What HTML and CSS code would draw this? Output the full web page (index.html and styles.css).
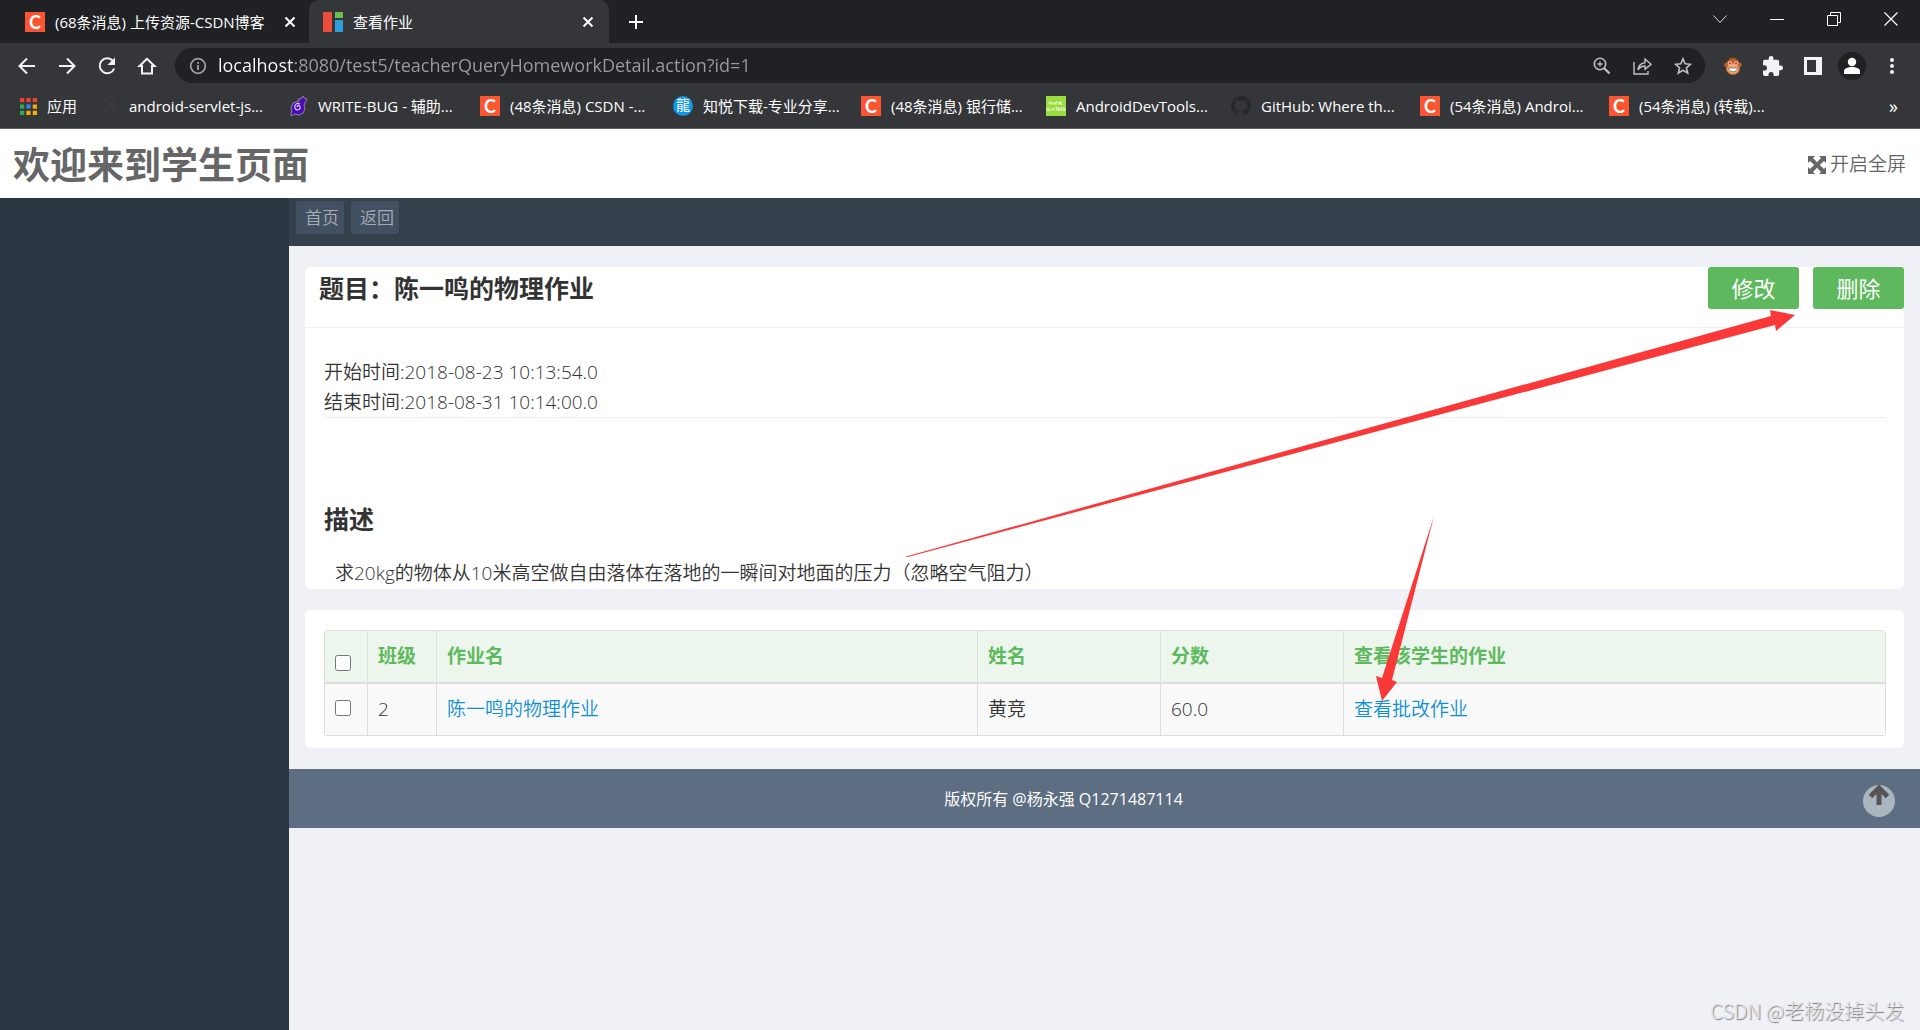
FILE: index.html
```html
<!DOCTYPE html>
<html lang="zh-CN">
<head>
<meta charset="utf-8">
<title>查看作业</title>
<link rel="stylesheet" href="styles.css">
</head>
<body>
<div class="window">
  <header class="browser">
    <div class="tabstrip">
      <div class="tab">
        <span class="fav fav-c">C</span>
        <span class="tab-title">(68条消息) 上传资源-CSDN博客</span>
        <button class="icon-btn close" aria-label="关闭标签页"><svg width="12" height="12" viewBox="0 0 12 12"><path d="M1.5 1.5l9 9M10.5 1.5l-9 9" stroke="#fff" stroke-width="2"/></svg></button>
      </div>
      <div class="tab tab-active">
        <svg class="fav" viewBox="0 0 20 20"><path fill="#eb4d3a" d="M0 0h9v20H0z"/><path fill="#6abf4b" d="M12 0h8v6h-8z"/><path fill="#2e9fdb" d="M12 8h8v12h-8z"/><path fill="#333" d="M9 0h1v20H9zM12 6h8v1h-8z"/></svg>
        <span class="tab-title">查看作业</span>
        <button class="icon-btn close" aria-label="关闭标签页"><svg width="12" height="12" viewBox="0 0 12 12"><path d="M1.5 1.5l9 9M10.5 1.5l-9 9" stroke="#fff" stroke-width="2"/></svg></button>
      </div>
      <button class="icon-btn newtab" aria-label="新标签页"><svg width="16" height="16" viewBox="0 0 16 16"><path d="M8 1v14M1 8h14" stroke="#fff" stroke-width="2"/></svg></button>
      <div class="win-controls">
        <button class="icon-btn" aria-label="搜索标签页"><svg width="14" height="14" viewBox="0 0 14 14"><path d="M.5 3.500l6.500 7 6.500-7" fill="none" stroke="#ddd"/></svg></button>
        <button class="icon-btn" aria-label="最小化"><svg width="14" height="14" viewBox="0 0 14 14"><path d="M0 7.500h14" stroke="#fff"/></svg></button>
        <button class="icon-btn" aria-label="还原"><svg width="14" height="14" viewBox="0 0 14 14"><path d="M.5 3.500h10v10H.5zM3.500 3V.5h10v10H11" fill="none" stroke="#fff"/></svg></button>
        <button class="icon-btn" aria-label="关闭"><svg width="14" height="14" viewBox="0 0 14 14"><path d="M.5.5l13 13M13.500.5l-13 13" stroke="#fff" stroke-width="1.200"/></svg></button>
      </div>
    </div>

    <div class="toolbar">
      <div class="nav-btns">
        <button class="icon-btn" aria-label="后退"><svg width="20" height="20" viewBox="0 0 20 20"><path d="M18 10H3M10 2.500L2.500 10l7.500 7.500" fill="none" stroke="#f1f3f4" stroke-width="2"/></svg></button>
        <button class="icon-btn" aria-label="前进"><svg width="20" height="20" viewBox="0 0 20 20"><path d="M2 10h15M10 2.500l7.500 7.500-7.500 7.500" fill="none" stroke="#f1f3f4" stroke-width="2"/></svg></button>
        <button class="icon-btn" aria-label="刷新"><svg width="20" height="20" viewBox="0 0 20 20"><path d="M16 5A7.500 7.500 0 1 0 17.200 12.500" fill="none" stroke="#f1f3f4" stroke-width="2"/><path d="M18 1.500V9h-7.500z" fill="#f1f3f4"/></svg></button>
        <button class="icon-btn" aria-label="主页"><svg width="20" height="20" viewBox="0 0 20 20"><path d="M10 2.800L2.500 10H5v7.500h10V10h2.500z" fill="none" stroke="#f1f3f4" stroke-width="2"/></svg></button>
      </div>
      <div class="omnibox">
        <svg width="18" height="18" viewBox="0 0 18 18"><circle cx="9" cy="9" r="7.300" fill="none" stroke="#9aa0a6" stroke-width="1.700"/><path d="M9 8v5M9 5v1.800" stroke="#9aa0a6" stroke-width="1.800"/></svg>
        <input class="url" type="text" aria-label="地址" value="localhost:8080/test5/teacherQueryHomeworkDetail.action?id=1">
        <button class="icon-btn" aria-label="缩放"><svg width="18" height="18" viewBox="0 0 18 18"><circle cx="7" cy="7" r="5.700" fill="none" stroke="#bdc1c6" stroke-width="1.600"/><path d="M11.200 11.200L16.500 16.500" stroke="#bdc1c6" stroke-width="2.200"/><path d="M7 4.500v5M4.500 7h5" stroke="#bdc1c6" stroke-width="1.300"/></svg></button>
        <button class="icon-btn" aria-label="分享"><svg width="19" height="18" viewBox="0 0 19 18"><path d="M1 5v12h14v-3M5 13C5.500 8.500 8 6 12 5.700V2l6 5.300-6 5V9C9 9 6.500 10.500 5 13z" fill="none" stroke="#bdc1c6" stroke-width="1.400"/></svg></button>
        <button class="icon-btn" aria-label="收藏"><svg width="18" height="18" viewBox="0 0 18 18"><path d="M9 1.800l2.100 5 5.400.5-4.100 3.500 1.300 5.300L9 13.300l-4.700 2.800 1.300-5.300L1.500 7.300l5.400-.5z" fill="none" stroke="#bdc1c6" stroke-width="1.600"/></svg></button>
      </div>
      <div class="extensions">
        <button class="icon-btn" aria-label="扩展"><svg width="18" height="20" viewBox="0 0 18 20"><path d="M5 3l1-2 2 1 1-2 1 2 2-1v2z" fill="#7b4226"/><circle cx="2.500" cy="9" r="2.300" fill="#b5662f"/><circle cx="15.500" cy="9" r="2.300" fill="#b5662f"/><rect x="2" y="2.500" width="14" height="16.500" rx="6.500" fill="#b5662f"/><ellipse cx="9" cy="13" rx="6" ry="5" fill="#e8a878"/><circle cx="6" cy="7.500" r="2.200" fill="#f3b890"/><circle cx="12" cy="7.500" r="2.200" fill="#f3b890"/><circle cx="6" cy="7.500" r="1" fill="#e11"/><circle cx="12" cy="7.500" r="1" fill="#e11"/><path d="M4.500 12h9c0 5-9 5-9 0z" fill="#fff" stroke="#6b3a20" stroke-width=".6"/></svg></button>
        <button class="icon-btn" aria-label="扩展程序"><svg width="20" height="20" viewBox="2 1 21 21"><path fill="#f1f3f4" d="M20.500 11H19V7a2 2 0 0 0-2-2h-4V3.500a2.500 2.500 0 0 0-5 0V5H4a2 2 0 0 0-2 2v3.800h1.500a2.700 2.700 0 0 1 0 5.400H2V20a2 2 0 0 0 2 2h3.800v-1.500a2.700 2.700 0 0 1 5.400 0V22H17a2 2 0 0 0 2-2v-4h1.500a2.500 2.500 0 0 0 0-5z"/></svg></button>
        <button class="icon-btn" aria-label="侧边栏"><svg width="18" height="18" viewBox="0 0 18 18"><path fill="#f1f3f4" fill-rule="evenodd" d="M0 0h18v18H0zM3 3v12h9V3z"/></svg></button>
        <button class="icon-btn avatar" aria-label="用户"><svg width="18" height="18" viewBox="0 0 18 18"><circle cx="9" cy="5" r="4.200" fill="#fff"/><path d="M1 17v-3c0-3 5-4 8-4s8 1 8 4v3z" fill="#fff"/></svg></button>
        <button class="icon-btn" aria-label="菜单"><svg width="20" height="18" viewBox="0 0 20 18"><g fill="#f1f3f4"><circle cx="10" cy="3" r="2"/><circle cx="10" cy="9" r="2"/><circle cx="10" cy="15" r="2"/></g></svg></button>
      </div>
    </div>

    <nav class="bookmarks" aria-label="书签">
      <a class="bm" href="#"><svg class="apps" viewBox="0 0 16 16"><path fill="#ea4335" d="M0 0h4v4H0zM6 0h4v4H6zM12 0h4v4h-4z"/><path fill="#34a853" d="M0 6h4v4H0zM0 12h4v4H0z"/><path fill="#2b88f0" d="M6 6h4v4H6z"/><path fill="#fbab05" d="M12 6h4v4h-4zM6 12h4v4H6zM12 12h4v4h-4z"/></svg>应用</a>
      <a class="bm" href="#"><svg class="fav" viewBox="0 0 20 20"><g fill="none" stroke="#463c3c"><circle cx="11" cy="4" r="3.500"/><path d="M2 8c-1 6 4 8 8 6l2-6c3 1 3 6 5 8"/></g></svg>android-servlet-js...</a>
      <a class="bm" href="#"><svg class="fav" viewBox="0 0 20 20"><path d="M11 5l-1-2 3 0 2-3 1 2 3 1-2 4-1 2 1 4-2 4-4 2-4-1-4 2 0-3 1-1-1-4 2-5z" fill="#4a0bb5" stroke="#8d83a5"/><path d="M12 8c-3-2-6 1-5 4s6 2 5-1-3-1-3 0" fill="none" stroke="#d6c9f2" stroke-width="1.200"/></svg>WRITE-BUG - 辅助...</a>
      <a class="bm" href="#"><span class="fav fav-c">C</span>(48条消息) CSDN -...</a>
      <a class="bm" href="#"><span class="fav fav-dragon">龍</span>知悦下载-专业分享...</a>
      <a class="bm" href="#"><span class="fav fav-c">C</span>(48条消息) 银行储...</a>
      <a class="bm" href="#"><svg class="fav" viewBox="0 0 20 20"><path fill="#9adb41" d="M0 0h20v20H0z"/><path d="M2 8.500l2-3 1 3 1-2 2 2V6l2 2.500V6h2l1 2.500 1-3 1 3M15 5.500v3h1.500M1 11.500v3h2v-3M5 12.500l-1 1 1.500 1M6.500 12l1 2.500 1-2.500M9 11.500h3M10.500 12v2.500M14 12v2.500h-2V12zM15.500 11v3.500M19 12h-2v1.500h2v1h-2" fill="none" stroke="#eaffd2" stroke-width=".9"/></svg>AndroidDevTools...</a>
      <a class="bm" href="#"><svg class="fav" viewBox="0 0 16 16"><path fill="#24292e" d="M8 0a8 8 0 0 0-2.530 15.590c.4.070.55-.17.550-.38v-1.490c-2.010.37-2.530-.49-2.690-.94-.09-.23-.48-.94-.82-1.130-.28-.15-.68-.52-.01-.53.63-.01 1.080.58 1.230.82.72 1.210 1.870.87 2.330.66.07-.52.28-.87.510-1.070-1.780-.2-3.640-.89-3.640-3.950 0-.87.310-1.590.820-2.150-.08-.2-.36-1.020.08-2.120 0 0 .67-.21 2.200.82a7.600 7.600 0 0 1 4 0c1.530-1.040 2.200-.82 2.200-.82.440 1.100.16 1.920.08 2.120.51.560.82 1.270.82 2.150 0 3.070-1.870 3.750-3.650 3.950.29.250.54.730.54 1.480v2.200c0 .21.150.46.550.38A8 8 0 0 0 8 0z"/></svg>GitHub: Where th...</a>
      <a class="bm" href="#"><span class="fav fav-c">C</span>(54条消息) Androi...</a>
      <a class="bm" href="#"><span class="fav fav-c">C</span>(54条消息) (转载)...</a>
      <button class="icon-btn more" aria-label="更多书签">»</button>
    </nav>
  </header>

  <header class="page-head">
    <h1>欢迎来到学生页面</h1>
    <a class="fullscreen" href="#"><svg width="18" height="18" viewBox="0 0 18 18"><path fill="#666" d="M0 0h7L5 2l4 4.200L13 2l-2-2h7v7l-2-2-4.200 4 4.200 4 2-2v7h-7l2-2-4-4.200L5 16l2 2H0v-7l2 2 4.200-4L2 5 0 7z"/></svg>开启全屏</a>
  </header>

  <div class="shell">
    <aside class="sidebar"></aside>
    <main class="content">
      <nav class="crumbs"><a href="#">首页</a><a href="#">返回</a></nav>

      <section class="card detail">
        <div class="card-head">
          <h2>题目：陈一鸣的物理作业</h2>
          <div class="actions"><button class="btn">修改</button><button class="btn">删除</button></div>
        </div>
        <div class="card-body">
          <div class="times">
            <div>开始时间:2018-08-23 10:13:54.0</div>
            <div>结束时间:2018-08-31 10:14:00.0</div>
          </div>
          <h2>描述</h2>
          <p>求20kg的物体从10米高空做自由落体在落地的一瞬间对地面的压力（忽略空气阻力）</p>
        </div>
      </section>

      <section class="card list">
        <table>
          <colgroup><col class="c-check"><col class="c-class"><col class="c-name"><col class="c-mid"><col class="c-mid"><col></colgroup>
          <thead><tr><th class="head-check"><input type="checkbox" aria-label="全选"></th><th>班级</th><th>作业名</th><th>姓名</th><th>分数</th><th>查看该学生的作业</th></tr></thead>
          <tbody><tr><td class="row-check"><input type="checkbox" aria-label="选择此行"></td><td>2</td><td><a href="#">陈一鸣的物理作业</a></td><td>黄竞</td><td>60.0</td><td><a href="#">查看批改作业</a></td></tr></tbody>
        </table>
      </section>

      <footer class="foot">
        <span>版权所有 @杨永强 Q1271487114</span>
        <a class="to-top" href="#" aria-label="返回顶部"><svg width="22" height="22" viewBox="0 0 22 22"><path d="M11 20V4M2.500 11.500L11 3l8.500 8.500" fill="none" stroke="#555" stroke-width="5"/></svg></a>
      </footer>

      <svg class="arrow arrow-a" width="889" height="247" viewBox="0 0 889 247"><path fill="#fb3838" d="M0 246.500L865 6 864 0l25 5-19 16-1-6L0 247.500z"/></svg>
      <svg class="arrow arrow-b" width="58" height="185" viewBox="0 0 58 185"><path fill="#fb3838" d="M58 0L16 164l5 2L6 185 0 160l6 2z"/></svg>
    </main>
  </div>
  <div class="watermark">CSDN @老杨没掉头发</div>
</div>
</body>
</html>
```
FILE: styles.css
```css
* { box-sizing: border-box; }
body {
  margin: 0;
  background: #f0f1f7;
  color: #333;
  font: 350 19px/31px "Open Sans", "Noto Sans CJK SC", sans-serif;
}
h1, h2, p { margin: 0; }
a { color: #0e90d2; text-decoration: none; }
svg { display: block; flex: none; }
input, button { font: inherit; }
.window { position: relative; display: flex; flex-direction: column; min-height: 100vh; }
.icon-btn {
  display: flex; align-items: center; justify-content: center;
  padding: 0; border: 0; background: none; color: #fff;
}

/* browser frame */
.browser {
  background: #35363a; color: #fff; border-bottom: 1px solid #5f6064;
  font-size: 15px; line-height: 20px; font-weight: 400;
}
.tabstrip { display: flex; height: 43px; background: #202124; }
.tab { display: flex; align-items: center; width: 309px; padding: 0 13px 0 25px; gap: 10px; }
.tab-active { width: 300px; padding: 0 15px 0 14px; background: #35363a; border-radius: 10px 10px 0 0; }
.tab-title { flex: 1; white-space: nowrap; overflow: hidden; }
.newtab { width: 54px; }
.win-controls { display: flex; margin-left: auto; padding: 0 1px 6px 0; }
.win-controls .icon-btn { width: 57px; }
.fav { width: 20px; height: 20px; flex: none; }
.fav-c {
  background: #fc5531; color: #fff; text-align: center;
  font: 700 18px/20px Lato, sans-serif;
}
.fav-dragon {
  border-radius: 10px; background: #1296e8; color: #fff; text-align: center;
  font-size: 14px; line-height: 18px;
}
.toolbar { display: flex; align-items: center; height: 45px; }
.nav-btns { display: flex; gap: 20px; padding: 0 18px 0 17px; }
.omnibox {
  flex: 1; display: flex; align-items: center; height: 35px; gap: 21px;
  padding: 0 13px; border-radius: 18px; background: #202124;
}
.omnibox svg { margin-left: 1px; }
.url {
  flex: 1; min-width: 0; height: 30px; margin-left: -10px; padding: 0 0 2px; border: 0; outline: 0;
  font-size: 18px; line-height: 28px; color: transparent;
  background: linear-gradient(90deg, #fff 77px, #9a9da1 77px);
  -webkit-background-clip: text; background-clip: text;
}
.extensions { display: flex; align-items: center; gap: 21px; padding: 0 18px 0 19px; }
.avatar { width: 28px; height: 28px; margin: 0 -5px; border-radius: 14px; background: #202124; }
.bookmarks {
  display: grid; height: 40px; align-items: center; padding: 0 22px 4px 20px;
  grid-template-columns: 79px 189px 192px 193px 188px 185px 185px 189px 189px 1fr auto;
}
.bm { display: flex; align-items: center; gap: 10px; color: #fff; white-space: nowrap; }
.apps { width: 17px; height: 17px; }
.more { font-size: 18px; font-weight: 400; }

/* page */
.page-head {
  display: flex; align-items: center; justify-content: space-between;
  height: 69px; padding: 2px 14px 0 13px; background: #fff; color: #666;
}
h1 { font-size: 37px; line-height: 56px; }
.fullscreen { display: flex; align-items: center; gap: 4px; color: #666; }
.shell { flex: 1; display: flex; }
.sidebar { width: 289px; background: #293541; }
.content { position: relative; flex: 1; min-width: 0; }
.crumbs { display: flex; gap: 7px; height: 48px; padding: 3px 7px; background: #35404d; }
.crumbs a {
  height: 33px; padding: 0 5px 0 9px; border-radius: 3px; background: #425062;
  color: #a7adb6; font-size: 17px; line-height: 33px;
}
.card { margin: 21px 16px; border-radius: 6px; background: #fff; }
.card-head {
  display: flex; justify-content: space-between; height: 61px; padding-left: 14px;
  border-bottom: 1px solid #eef0f2;
}
h2 { font-size: 25px; line-height: 42px; }
.actions { display: flex; gap: 14px; }
.btn {
  width: 91px; height: 42px; padding: 0; border: 0; border-radius: 3px;
  background: #5eb95e; color: #fff; font-size: 22px; font-weight: 400;
}
.card-body { padding: 29px 18px 0 19px; }
.times { margin-bottom: 80px; border-bottom: 1px solid #eee; line-height: 30px; }
.card-body p { padding: 18px 11px 0; line-height: 31px; }
.list { padding: 20px 18px 12px 19px; }
table {
  width: 100%; table-layout: fixed; border: 1px solid #ddd; border-radius: 3px;
  border-spacing: 0;
}
.c-check { width: 42px; }
.c-class { width: 69px; }
.c-name { width: 541px; }
.c-mid { width: 183px; }
th, td { height: 53px; padding: 0 10px; text-align: left; border-left: 1px solid #ddd; }
th:first-child, td:first-child { border-left: 0; }
th { background: #ecf6ec; color: #5eb95e; border-bottom: 2px solid #ddd; font-weight: 700; }
td { height: 51px; background: #f9f9f9; }
input[type="checkbox"] { display: block; width: 16px; height: 16px; margin: 0; }
.head-check { padding-top: 12px; }
.row-check { padding-bottom: 4px; }
.foot {
  position: relative; display: flex; align-items: center; justify-content: center;
  height: 59px; padding: 2px 82px 0 0; background: #5d6d82; color: #fff;
  font-size: 16px; font-weight: 400;
}
.to-top {
  position: absolute; right: 25px; top: 16px; width: 32px; height: 32px;
  padding-left: 5px; border-radius: 16px; background: #abb5bf;
}
.arrow { position: absolute; pointer-events: none; }
.arrow-a { right: 125px; top: 112px; }
.arrow-b { right: 486px; top: 318px; }
.watermark {
  position: absolute; right: 16px; bottom: 4px; color: #e4e4e8; font-size: 20px;
  font-family: "Noto Sans CJK SC", sans-serif; font-weight: 300;
  text-shadow: 1px 1px 1px #777;
}
```
